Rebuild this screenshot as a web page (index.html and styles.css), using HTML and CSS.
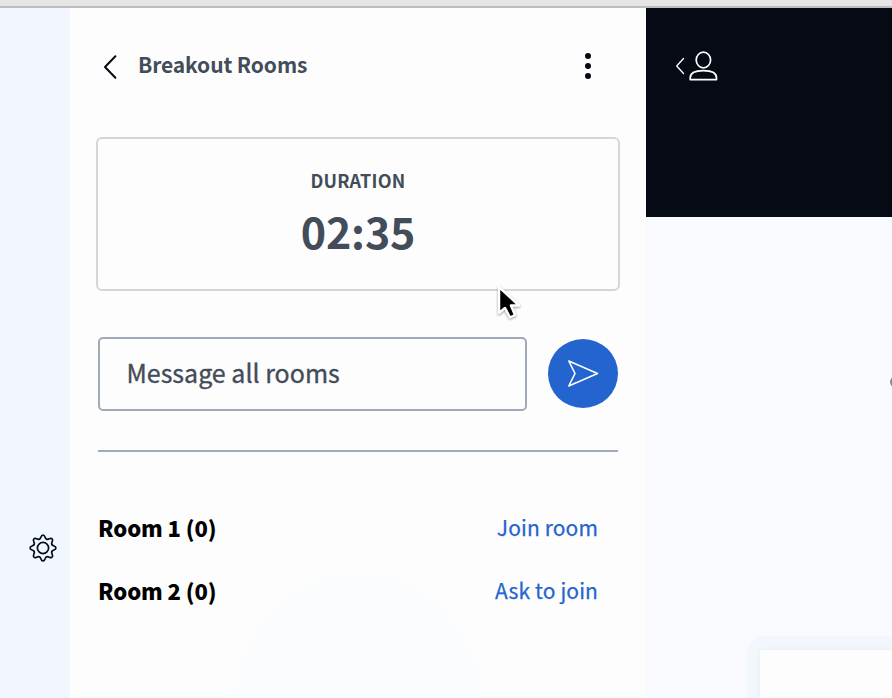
FILE: index.html
```
<!DOCTYPE html>
<html lang="en">
<head>
<meta charset="utf-8">
<title>Breakout Rooms</title>
<link rel="stylesheet" href="styles.css">
</head>
<body>
<div class="topbar"></div>
<div class="app">
  <nav class="rail">
    <svg class="gear" width="30" height="30" viewBox="-15 -15 30 30">
      <defs><path id="tooth" d="M-3.6 -8.8C-1.4 -9.7-2.6 -12.9 0 -12.9S1.4 -9.7 3.6 -8.8"/></defs>
      <use href="#tooth"/><use href="#tooth" transform="rotate(45)"/><use href="#tooth" transform="rotate(90)"/><use href="#tooth" transform="rotate(135)"/><use href="#tooth" transform="rotate(180)"/><use href="#tooth" transform="rotate(225)"/><use href="#tooth" transform="rotate(270)"/><use href="#tooth" transform="rotate(315)"/>
      <circle r="5.6"/>
    </svg>
  </nav>
  <main class="panel">
    <header class="head">
      <svg class="back" width="14" height="26" viewBox="0 0 14 26"><path d="M12.4 2.2 2 13 12.4 23.8"/></svg>
      <h1 class="title">Breakout Rooms</h1>
      <svg class="more" width="8" height="28" viewBox="0 0 8 28"><circle cx="4" cy="4" r="3"/><circle cx="4" cy="14" r="3"/><circle cx="4" cy="24" r="3"/></svg>
    </header>
    <section class="timer">
      <div class="label">DURATION</div>
      <div class="time">02:35</div>
    </section>
    <div class="message">
      <div class="field"><span class="hint">Message all rooms</span></div>
      <div class="send"><svg width="70" height="70" viewBox="0 0 70 70"><path d="M20.8 22 49.5 34.5 20.8 47 27 34.5Z"/></svg></div>
    </div>
    <div class="rooms">
      <div class="room"><b class="name">Room 1 (0)</b><a class="join">Join room</a></div>
      <div class="room"><b class="name">Room 2 (0)</b><a class="ask">Ask to join</a></div>
    </div>
    <div class="glow"></div>
  </main>
  <aside class="stage">
    <div class="dark">
      <svg width="44" height="34" viewBox="0 0 44 34"><path class="thin" d="M9.5 9.5 2.7 17 9.5 24.5"/><ellipse cx="29.4" cy="11" rx="7.2" ry="7.8"/><path d="M16.2 30.6V29C16.2 23.8 22 21.7 29.4 21.7S42.5 23.8 42.5 29V30.6Z"/></svg>
    </div>
    <div class="light"><div class="edge"></div><div class="halo"><div class="sheet"></div></div></div>
  </aside>
</div>
<svg class="cursor" width="30" height="40" viewBox="0 0 30 40"><path d="M6 4V30L12 25 17 34.5 22 32 18 22.5H26Z"/></svg>
</body>
</html>
```
FILE: styles.css
```
* { box-sizing: border-box; }
body {
  margin: 0;
  height: 698px;
  overflow: hidden;
  display: flex;
  flex-direction: column;
  position: relative;
  background: #fdfdfd;
  color: #434c59;
  font-family: "Noto Sans CJK SC", sans-serif;
}
svg { display: block; flex: none; fill: none; stroke-linecap: round; stroke-linejoin: round; }
.topbar { height: 8px; flex: none; background: #e5e5e5; border-bottom: 2px solid #bdbdbd; }
.app { flex: 1; display: flex; min-height: 0; }
.rail { width: 70px; background: #f2f6ff; padding: 525px 0 0 28px; }
.gear { stroke: #06101c; stroke-width: 1.7; }
.panel { width: 576px; padding: 0 27px 0 26px; position: relative; overflow: hidden; }
.head { height: 129px; display: flex; padding: 0 27px 14px 7px; align-items: center; }
.back { stroke: #050a14; stroke-width: 2; margin-top: 2px; }
.title { margin: -4px auto 0 21px; font-size: 21px; letter-spacing: -0.1px; line-height: 32px; font-weight: 700; }
.more { fill: #050a14; }
.timer {
  height: 154px;
  width: 524px;
  border: 2px solid #d2d7de;
  border-radius: 6px;
  padding-top: 27px;
  text-align: center;
}
.label { font-size: 18px; letter-spacing: 0.25px; line-height: 28px; font-weight: 700; }
.time { font-size: 43px; letter-spacing: -0.2px; line-height: 60px; font-weight: 700; margin-top: 6px; }
.message {
  margin: 46px 0 0 2px;
  width: 520px;
  height: 115px;
  display: flex;
  justify-content: space-between;
  border-bottom: 2px solid #a0abba;
}
.field { width: 429px; height: 74px; border: 2px solid #a0abba; border-radius: 5px; padding-left: 26.5px; line-height: 66px; }
.hint { font-size: 25px; -webkit-text-stroke: 0.35px #434c59; }
.send { width: 70px; height: 69px; margin-top: 2px; border-radius: 50%; background: #2464cf; }
.send svg { stroke: #fff; stroke-width: 1.6; }
.rooms { padding: 44px 21px 0 2px; position: relative; z-index: 1; }
.room { height: 63px; display: flex; justify-content: space-between; line-height: 63px; }
.name { color: #000; font-size: 22px; letter-spacing: -0.1px; font-weight: 900; }
.join, .ask { color: #2464cf; font-size: 21px; letter-spacing: 0.12px; -webkit-text-stroke: 0.25px #2464cf; }
.glow { position: absolute; left: 162px; top: 563px; width: 252px; height: 280px; border-radius: 50%; background: #fbfcfe; }
.stage { flex: 1; display: flex; flex-direction: column; }
.dark { height: 209px; background: #050a14; padding: 41px 0 0 28px; }
.dark svg { stroke: #fff; stroke-width: 1.7; }
.dark .thin { stroke-width: 1.3; }
.light { flex: 1; background: #f8faff; position: relative; overflow: hidden; }
.edge { position: absolute; left: 244px; top: 159px; width: 12px; height: 12px; border-radius: 50%; background: #888; }
.halo { position: absolute; left: 101px; top: 419px; width: 230px; height: 130px; padding: 14px 0 0 13px; border-radius: 18px; background: #f2f6fd; }
.sheet { height: 100px; background: #fdfdfd; box-shadow: 0 0 4px #e6ebf3; }
.cursor { position: absolute; left: 493px; top: 283px; fill: #000; stroke: #fff; stroke-width: 2.5; filter: drop-shadow(0 1px 1px #0006); }
```
